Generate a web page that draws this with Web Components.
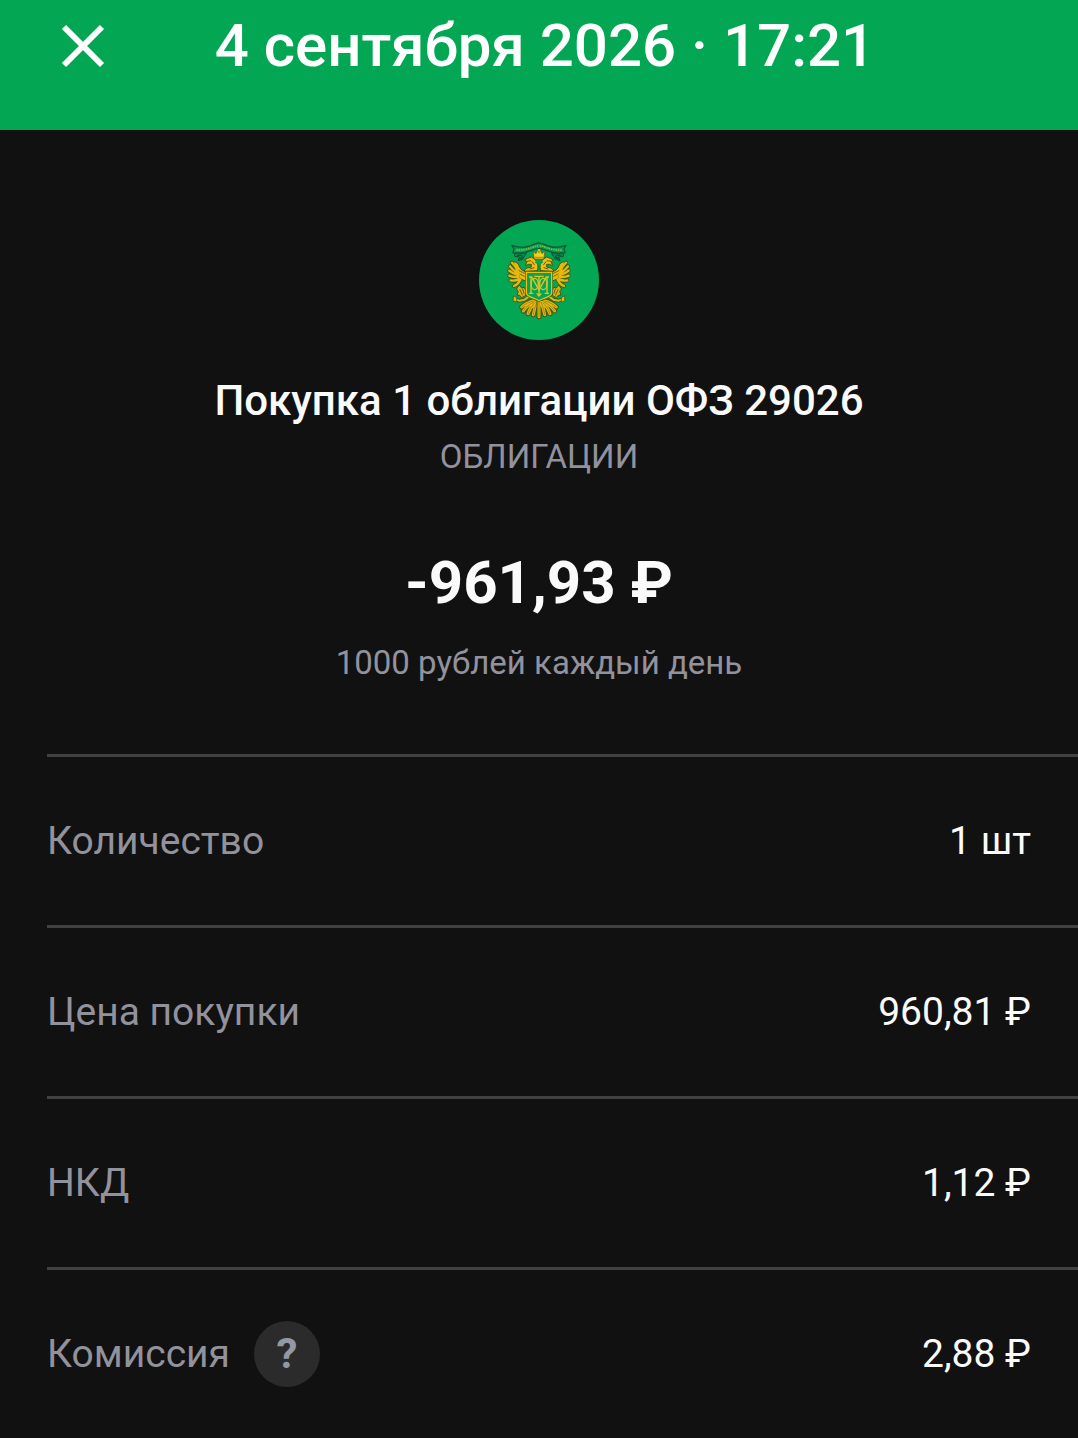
<!DOCTYPE html>
<html lang="ru">
<head>
    <meta charset="UTF-8">
    <meta name="viewport" content="width=device-width, initial-scale=1.0">
    <title>Покупка облигации</title>
    <style>
        body{
            margin: 0;
            min-height: 100vh;
            background-color: #111;
            color: #fafafa;
            font-family: Roboto, "Liberation Sans", sans-serif;
        }
    </style>
</head>
<body>
    <template id="template-header">
        <style>
            :host{
                display: block;
                background-color: #02a653;
                color: white;
            }
            header{
                display: grid;
                grid-template-columns: 82px 1fr 70px;
                align-items: center;
                padding: 11px 48px 49px;
            }
            button{
                display: flex;
                align-items: center;
                justify-content: center;
                width: 70px;
                height: 70px;
                padding: 0;
                border: 0;
                background: none;
                color: inherit;
            }
            h1{
                margin: 0;
                font-size: 60px;
                line-height: 70px;
                font-weight: 500;
                text-align: center;
                white-space: nowrap;
            }
        </style>
        <header>
            <button type="button" aria-label="Закрыть">
                <svg width="44" height="44" viewBox="0 0 44 44" fill="none" stroke="currentColor" stroke-width="6">
                    <path d="M3 3 41 41M41 3 3 41"/>
                </svg>
            </button>
            <h1><slot></slot></h1>
        </header>
    </template>

    <template id="template-emblem">
        <style>
            :host{
                display: block;
                width: 120px;
                height: 120px;
            }
            svg{
                display: block;
            }
        </style>
        <svg width="120" height="120" viewBox="27 30 360 360" role="img" aria-label="Минфин России">
            <defs>
                <!-- feathers are stroked twice: dark edge, then gold -->
                <path id="feathers" d="M143 184C138 172 133 164 126 158M144 190C134 184 126 177 120 169M145 195C134 193 124 188 118 182M146 200C136 202 126 201 118 197M148 206C139 212 130 213 122 211M151 209C147 218 141 224 132 228"/>
                <path id="tail" d="M190 273C178 276 166 281 155 291M192 276C180 282 169 290 160 303M196 277C187 286 179 296 174 311M201 277C196 288 192 299 190 314M207 274V320"/>
                <g id="half" stroke-linejoin="round" stroke-linecap="round">
                    <!-- wing -->
                    <use href="#feathers" fill="none" stroke="#3d5a18" stroke-width="12"/>
                    <path fill="#e8b90c" stroke="#3d5a18" stroke-width="3" d="M167 183C154 184 150 174 145 163C141 156 134 154 129 157C136 164 137 177 143 187L150 206 167 213Z"/>
                    <use href="#feathers" fill="none" stroke="#e6b80e" stroke-width="7"/>
                    <path fill="none" stroke="#7d6c10" stroke-width="3" d="M147 182 164 190M150 192 163 199"/>
                    <!-- neck and head -->
                    <path fill="#f0bd0c" stroke="#3d5a18" stroke-width="3" d="M201 182 162 184 168 175 184 171 184 163 176 163 166 167 171 155 163 150 173 145 184 141 195 148 203 160 204 171Z"/>
                    <path fill="none" stroke="#6b5a0c" stroke-width="3" d="M172 154 182 152M186 155 193 164M180 177 192 173"/>
                    <!-- leg and orb -->
                    <path fill="#dcb212" stroke="#3d5a18" stroke-width="3" d="M148 226 155 234 163 232 169 246 166 257 155 263 149 256 141 255 145 244 140 238Z"/>
                    <path fill="none" stroke="#6b6010" stroke-width="3" d="M150 239 157 255M158 237 162 250"/>
                    <path fill="none" stroke="#3d5a18" stroke-width="11" d="M136 268 148 272 164 269 176 260"/>
                    <path fill="none" stroke="#dfb514" stroke-width="6" d="M136 268 148 272 164 269 176 260"/>
                    <path fill="#e8b90c" stroke="#3d5a18" stroke-width="2" d="M131 258 140 263 140 276 130 273Z"/>
                    <!-- tail -->
                    <use href="#tail" fill="none" stroke="#3d5a18" stroke-width="15"/>
                    <use href="#tail" fill="none" stroke="#e6b80e" stroke-width="9"/>
                    <use href="#tail" fill="none" stroke="#8a7611" stroke-width="2"/>
                    <!-- ribbon -->
                    <path fill="#068a4b" stroke="#0a5136" stroke-width="3" d="M134 128 152 130 170 128 158 148 144 152 148 141 135 139Z"/>
                    <path fill="none" stroke="#075137" stroke-width="4" d="M144 136C160 134 160 143 149 146"/>
                    <path fill="#06a054" d="M207 99C192 100 182 109 168 111C153 113 140 111 126 106L132 116 129 128C151 132 170 127 184 121 193 117 200 116 207 116Z"/>
                    <path fill="none" stroke="#0a5a38" stroke-width="4" d="M207 99C192 100 182 109 168 111C153 113 140 111 126 106L132 116 129 128C151 132 170 127 184 121 193 117 200 116 207 116"/>
                    <path fill="none" stroke="#8fbb3f" stroke-width="5" stroke-dasharray="4 3" stroke-linecap="butt" d="M139 120C157 121 173 117 185 113 194 109 200 108 207 108"/>
                </g>
            </defs>
            <circle cx="207" cy="210" r="180" fill="#02a653"/>
            <use href="#half"/>
            <use href="#half" transform="matrix(-1 0 0 1 414 0)"/>
            <path fill="#f9cf16" stroke="#625812" stroke-width="2" stroke-linejoin="round" d="M189 123 198 131 202 121 207 128 212 121 216 131 225 123 221 147 193 147Z"/>
            <path stroke="#f9cf16" stroke-width="3" d="M207 117V126M203 120H211"/>
            <path stroke="#83700f" stroke-width="2" d="M195 142H219"/>
            <path fill="#05a454" d="M198 149H216L219 158 207 166 195 158Z"/>
            <!-- shield with monogram -->
            <path fill="#05a454" stroke="#2f5f22" stroke-width="8" d="M169 187H245V248C245 262 219 263 207 272C195 263 169 262 169 248Z"/>
            <path fill="#05a454" stroke="#e9bd12" stroke-width="4" d="M169 187H245V248C245 262 219 263 207 272C195 263 169 262 169 248Z"/>
            <g fill="none" stroke="#dcc427" stroke-width="4">
                <path d="M183 201V250M231 201V250M177 250H190M224 250H237M177 201H187M227 201H237"/>
                <path d="M186 202 207 240 228 202"/>
                <ellipse cx="194" cy="222" rx="11" ry="17"/>
                <ellipse cx="220" cy="222" rx="11" ry="17"/>
                <path d="M193 199H221M207 199V256M200 250 207 258 214 250"/>
            </g>
        </svg>
    </template>

    <template id="template-summary">
        <style>
            :host{
                display: block;
            }
            section{
                display: flex;
                flex-direction: column;
                align-items: center;
                padding: 90px 48px 67px;
                text-align: center;
            }
            h2{
                margin: 36px 0 0;
                font-size: 42px;
                line-height: 50px;
                font-weight: 500;
            }
            p{
                margin: 0;
                font-size: 33px;
                line-height: 48px;
                color: #92929d;
            }
            .kind{
                margin-top: 7px;
            }
            .amount{
                margin: 66px 0 20px;
                font-size: 60px;
                line-height: 72px;
                font-weight: 700;
                color: inherit;
            }
        </style>
        <section>
            <bond-emblem></bond-emblem>
            <h2><slot name="title"></slot></h2>
            <p class="kind"><slot name="kind"></slot></p>
            <p class="amount"><slot name="amount"></slot></p>
            <p><slot name="note"></slot></p>
        </section>
    </template>

    <template id="template-row">
        <style>
            :host{
                display: flex;
                align-items: center;
                justify-content: space-between;
                min-height: 168px;
                margin-left: 47px;
                padding-right: 47px;
                border-top: 3px solid #414141;
                font-size: 39px;
                line-height: 48px;
            }
            .label{
                display: flex;
                align-items: center;
                gap: 24px;
                color: #92929d;
            }
        </style>
        <div class="label"><slot name="label"></slot><slot name="help"></slot></div>
        <div><slot></slot></div>
    </template>

    <template id="template-help">
        <style>
            :host{
                display: block;
            }
            button{
                display: block;
                width: 66px;
                height: 66px;
                padding: 0;
                border: 0;
                border-radius: 50%;
                background-color: #2b2b2b;
                color: #9299a5;
                font: 700 42px/66px Roboto, sans-serif;
            }
        </style>
        <button type="button" title="Подробнее о комиссии">?</button>
    </template>

    <script>
        function defineFromTemplate(name, templateId){
            customElements.define(name, class extends HTMLElement{
                constructor(){
                    super();

                    this.attachShadow({ mode: "open" });
                    const tpl = document.getElementById(templateId);
                    this.shadowRoot.append(tpl.content.cloneNode(true));
                }
            });
        }
        defineFromTemplate("operation-header", "template-header");
        defineFromTemplate("bond-emblem", "template-emblem");
        defineFromTemplate("operation-summary", "template-summary");
        defineFromTemplate("detail-row", "template-row");
        defineFromTemplate("help-button", "template-help");
    </script>

    <operation-header>4 сентября 2026 · 17:21</operation-header>
    <main>
        <operation-summary>
            <span slot="title">Покупка 1 облигации ОФЗ 29026</span>
            <span slot="kind">ОБЛИГАЦИИ</span>
            <span slot="amount">-961,93 ₽</span>
            <span slot="note">1000 рублей каждый день</span>
        </operation-summary>
        <detail-row><span slot="label">Количество</span>1 шт</detail-row>
        <detail-row><span slot="label">Цена покупки</span>960,81 ₽</detail-row>
        <detail-row><span slot="label">НКД</span>1,12 ₽</detail-row>
        <detail-row>
            <span slot="label">Комиссия</span>
            <help-button slot="help"></help-button>
            2,88 ₽
        </detail-row>
    </main>
</body>
</html>
